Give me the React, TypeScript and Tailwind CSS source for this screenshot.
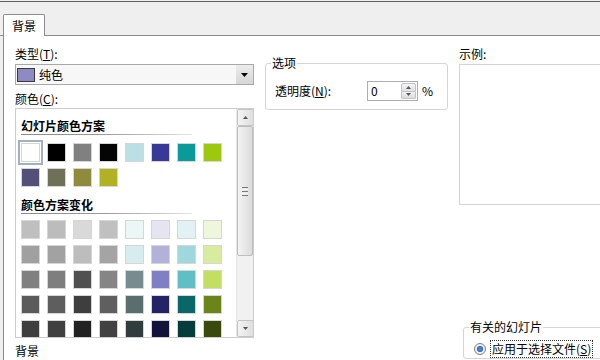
import React from "react";

const scheme1 = ["#ffffff", "#000000", "#808080", "#050505", "#bbdfe4", "#383898", "#0b9a9a", "#9dc80c"];
const scheme2 = ["#525079", "#6f7058", "#8e8c3c", "#b1b123"];
const variations = [
  ["#bfbfbf", "#bcbcbc", "#d9d9d9", "#c0c0c0", "#ebf6f7", "#e5e5f2", "#e2f2f4", "#eef6dc"],
  ["#a0a0a0", "#a2a2a2", "#bdbdbd", "#a4a4a4", "#d7ecee", "#b1b1da", "#9ed7dc", "#d8eb9f"],
  ["#808080", "#7e7e7e", "#505050", "#858585", "#778c8e", "#7f7fc3", "#5ec0c4", "#c1e061"],
  ["#5b5b5b", "#5e5e5e", "#3e3e3e", "#5f5f5f", "#5a6e70", "#232366", "#0a6767", "#6a8519"],
  ["#3e3e3e", "#404040", "#222222", "#424242", "#303c3d", "#12123a", "#053c3c", "#3a4a0c"],
];

function Swatch({ c, selected }: { c: string; selected?: boolean }) {
  return (
    <div
      className={
        "w-[19px] h-[19px] border border-[#d6d6d6]" +
        (selected ? " outline-2 outline-[#a3b0c0] outline-offset-1" : "")
      }
      style={{ background: c }}
    />
  );
}

function Header({ children }: { children: React.ReactNode }) {
  return (
    <div className="w-[171px]">
      <div className="font-bold leading-[16px] h-[16px]">{children}</div>
      <div className="h-px bg-linear-to-r from-[#8a8a8a] via-[#9c9c9c] to-[#e6e6e6]" />
    </div>
  );
}

function Tri({ down, color = "#4a4a4a" }: { down?: boolean; color?: string }) {
  return (
    <svg width="7" height="4" viewBox="0 0 7 4">
      {down ? <path d="M0 0 L7 0 L3.5 4 Z" fill={color} /> : <path d="M0 4 L7 4 L3.5 0 Z" fill={color} />}
    </svg>
  );
}

function ScrollBtn({ down }: { down?: boolean }) {
  return (
    <div className="h-[17px] w-[17px] rounded-[2px] border border-[#c4c4c4] bg-linear-to-r from-[#f4f4f4] to-[#dedede] flex items-center justify-center">
      <svg width="5" height="3" viewBox="0 0 5 3">
        {down ? <path d="M0 0 L5 0 L2.5 3 Z" fill="#555" /> : <path d="M0 3 L5 3 L2.5 0 Z" fill="#555" />}
      </svg>
    </div>
  );
}

export default function App() {
  return (
    <div className="w-[600px] h-[360px] overflow-hidden bg-[#efefef] flex flex-col text-[12px] leading-[16px] text-black font-['Noto_Sans_CJK_SC','Noto_Sans',sans-serif]">
      <div className="h-px bg-[#efefef]" />
      <div className="h-px bg-[#5f5f5f]" />
      <div className="h-[34px] flex items-end">
        <div className="w-[3px] h-full border-b border-[#8c8c8c]" />
        <div className="w-[42px] h-[22px] bg-white border border-b-0 border-[#8c8c8c] rounded-t-[2px] flex items-center justify-center pt-[1px]">
          背景
        </div>
        <div className="flex-1 h-full border-b border-[#8c8c8c]" />
      </div>
      <div className="flex-1 flex ml-[3px] border-l border-[#8c8c8c] bg-white min-h-0">
        {/* Left column */}
        <div className="ml-[11px] w-[239px] flex flex-col shrink-0">
          <div className="mt-[10px]">
            类型(<u>T</u>):
          </div>
          <div className="mt-[2px] h-[21px] border border-[#a9a9a9] bg-[#f7f7f7] flex items-center">
            <div className="ml-[1px] w-[18px] h-[14px] bg-[#8f89c4] border border-[#3a3a3a]" />
            <div className="ml-[4px]">纯色</div>
            <div className="flex-1" />
            <div className="w-[17px] h-full bg-linear-to-b from-[#ececec] to-[#d6d6d6] flex items-center justify-center">
              <Tri down color="#000" />
            </div>
          </div>
          <div className="mt-[6px]">
            颜色(<u>C</u>):
          </div>
          <div className="mt-[1px] h-[230px] border border-[#cdcdcd] flex overflow-hidden">
            <div className="flex-1 pl-[5px] overflow-hidden">
              <div className="mt-[9px]">
                <Header>幻灯片颜色方案</Header>
              </div>
              <div className="mt-[8px] grid grid-cols-[repeat(8,19px)] gap-x-[7px] gap-y-[6px]">
                {scheme1.map((c, i) => (
                  <Swatch key={"a" + i} c={c} selected={i === 0} />
                ))}
                {scheme2.map((c, i) => (
                  <Swatch key={"b" + i} c={c} />
                ))}
              </div>
              <div className="mt-[10px]">
                <Header>颜色方案变化</Header>
              </div>
              <div className="mt-[6px] grid grid-cols-[repeat(8,19px)] gap-x-[7px] gap-y-[6px]">
                {variations.flat().map((c, i) => (
                  <Swatch key={"v" + i} c={c} />
                ))}
              </div>
            </div>
            <div className="w-[17px] bg-[#f1f1f1] border-l border-[#e6e6e6] flex flex-col">
              <ScrollBtn />
              <div className="h-[130px] rounded-[2px] border border-[#bdbdbd] bg-linear-to-r from-[#f3f3f3] to-[#dcdcdc] flex flex-col items-center justify-center gap-[1px]">
                <div className="w-[6px] h-px bg-[#7a7a7a]" />
                <div className="w-[6px] h-px bg-[#f8f8f8]" />
                <div className="w-[6px] h-px bg-[#7a7a7a]" />
                <div className="w-[6px] h-px bg-[#f8f8f8]" />
                <div className="w-[6px] h-px bg-[#7a7a7a]" />
              </div>
              <div className="flex-1" />
              <ScrollBtn down />
            </div>
          </div>
          <div className="mt-[5px]">背景</div>
        </div>

        {/* Middle column */}
        <div className="ml-[11px] w-[183px] shrink-0">
          <fieldset className="mt-[19px] border border-[#d5d5d5] rounded-[3px] pl-[5px] pr-[5px] pt-[10px] pb-[8px]">
            <legend className="px-[1px] leading-[16px]">选项</legend>
            <div className="ml-[4px] flex items-center h-[20px]">
              <div className="w-[92px]">
                透明度(<u>N</u>):
              </div>
              <div className="w-[51px] h-[20px] border border-[#abadb3] bg-white flex items-center">
                <div className="pl-[3px] flex-1">0</div>
                <div className="w-[17px] h-full flex flex-col p-[1px] gap-0">
                  <div className="flex-1 border border-[#c2c2c2] rounded-t-[2px] bg-linear-to-b from-[#f5f5f5] to-[#e0e0e0] flex items-center justify-center">
                    <svg width="5" height="3" viewBox="0 0 5 3">
                      <path d="M0 3 L5 3 L2.5 0 Z" fill="#555" />
                    </svg>
                  </div>
                  <div className="flex-1 border border-t-0 border-[#c2c2c2] rounded-b-[2px] bg-linear-to-b from-[#f0f0f0] to-[#dcdcdc] flex items-center justify-center">
                    <svg width="5" height="3" viewBox="0 0 5 3">
                      <path d="M0 0 L5 0 L2.5 3 Z" fill="#555" />
                    </svg>
                  </div>
                </div>
              </div>
              <div className="ml-[4px]">%</div>
            </div>
          </fieldset>
        </div>

        {/* Right column */}
        <div className="ml-[11px] w-[170px] flex flex-col shrink-0">
          <div className="mt-[10px]">示例:</div>
          <div className="mt-[2px] h-[141px] border border-[#d4d4d4] shrink-0" />
          <fieldset className="ml-[4px] mt-[114px] border border-[#d5d5d5] rounded-[3px] pl-[5px] pt-[5px] shrink-0">
            <legend className="px-[1px] leading-[16px]">有关的幻灯片</legend>
            <div className="flex items-center h-[18px]">
              <div className="ml-[5px] w-[12px] h-[12px] rounded-full border border-[#7f7f7f] bg-[#eeeeee] flex items-center justify-center">
                <div className="w-[6px] h-[6px] rounded-full bg-radial from-[#5f9be8] to-[#123f8f]" />
              </div>
              <div className="ml-[4px] h-[18px] border border-dotted border-[#333] px-[1px] flex items-center whitespace-nowrap">
                应用于选择文件(<u>S</u>)
              </div>
            </div>
          </fieldset>
        </div>
      </div>
    </div>
  );
}
